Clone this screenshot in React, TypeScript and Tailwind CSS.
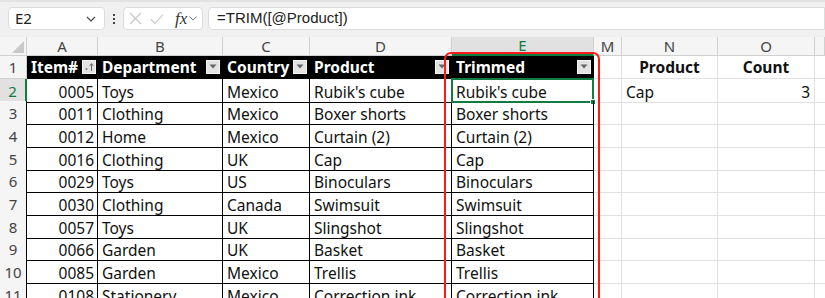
import React from 'react';

const rows = [
  ['0005', 'Toys', 'Mexico', "Rubik's cube", "Rubik's cube"],
  ['0011', 'Clothing', 'Mexico', 'Boxer shorts', 'Boxer shorts'],
  ['0012', 'Home', 'Mexico', 'Curtain (2)', 'Curtain (2)'],
  ['0016', 'Clothing', 'UK', 'Cap', 'Cap'],
  ['0029', 'Toys', 'US', 'Binoculars', 'Binoculars'],
  ['0030', 'Clothing', 'Canada', 'Swimsuit', 'Swimsuit'],
  ['0057', 'Toys', 'UK', 'Slingshot', 'Slingshot'],
  ['0066', 'Garden', 'UK', 'Basket', 'Basket'],
  ['0085', 'Garden', 'Mexico', 'Trellis', 'Trellis'],
  ['0108', 'Stationery', 'Mexico', 'Correction ink', 'Correction ink'],
];

const gridCols = 'grid grid-cols-[27px_71px_125px_87px_142px_142px_28px_96px_97px_1fr]';

const FilterButton: React.FC<{ sorted?: boolean }> = ({ sorted }) => (
  <div className="w-[14px] h-[14px] shrink-0 bg-[#e3e3e3] border border-[#f4f4f4] flex items-center justify-center">
    {sorted ? (
      <svg width="11" height="10" viewBox="0 0 11 10">
        <path d="M1 6.5 L4 6.5 L2.5 8.2 Z" fill="#666" />
        <path d="M7.5 9 L7.5 2" stroke="#666" strokeWidth="1" />
        <path d="M5.8 3.8 L7.5 1.6 L9.2 3.8" stroke="#666" strokeWidth="1" fill="none" />
      </svg>
    ) : (
      <svg width="8" height="5" viewBox="0 0 8 5">
        <path d="M0.5 0.5 L7.5 0.5 L4 4.5 Z" fill="#666" />
      </svg>
    )}
  </div>
);

const ColumnHeaders: React.FC = () => {
  const letters = ['A', 'B', 'C', 'D', 'E', 'M', 'N', 'O', ''];
  return (
    <div className={`${gridCols} h-[19px] bg-[#f5f5f5] text-[15px] leading-none text-[#444]`}>
      <div className="border-r border-b border-[#d0d0d0] flex items-end justify-end pr-[2px] pb-[2px]">
        <svg width="12" height="12" viewBox="0 0 12 12">
          <path d="M12 0 L12 12 L0 12 Z" fill="#c9c9c9" />
        </svg>
      </div>
      {letters.map((l, i) =>
        l === 'E' ? (
          <div key={i} className="bg-[#e1e1e1] border-r border-[#d0d0d0] border-b-2 border-b-[#107c41] flex items-center justify-center text-[#107c41]">
            {l}
          </div>
        ) : (
          <div key={i} className="border-r border-b border-[#d0d0d0] flex items-center justify-center">
            {l}
          </div>
        )
      )}
    </div>
  );
};

const RowNum: React.FC<{ n: number; active?: boolean; tableEdge?: boolean }> = ({ n, active, tableEdge }) => (
  <div
    className={
      active
        ? 'bg-[#e1e1e1] text-[#107c41] border-b border-[#d0d0d0] border-r-2 border-r-[#107c41] flex items-center justify-center pt-[2px] text-[15px] leading-none'
        : `bg-[#f5f5f5] text-[#444] border-b border-[#d0d0d0] border-r ${tableEdge ? 'border-r-black' : 'border-r-[#d0d0d0]'} flex items-center justify-center pt-[2px] text-[15px] leading-none`
    }
  >
    {n}
  </div>
);

const App: React.FC = () => {
  return (
    <div className="relative w-[825px] h-[298px] overflow-hidden bg-white font-['Noto_Sans',sans-serif]">
      {/* formula bar */}
      <div className="h-[37px] bg-[#f0f0f0] border-t-2 border-[#e2e2e2] flex items-start pt-[5px] pl-[8px]">
        <div className="w-[97px] h-[23px] bg-white border border-[#dcdcdc] rounded-[4px] flex items-center justify-between pl-[6px] pr-[8px] text-[15px] text-[#222]">
          <span>E2</span>
          <svg width="10" height="6" viewBox="0 0 10 6">
            <path d="M1 1 L5 5 L9 1" stroke="#444" strokeWidth="1.2" fill="none" />
          </svg>
        </div>
        <div className="w-[18px] h-[23px] flex flex-col items-center justify-center gap-[2px]">
          <span className="w-[2px] h-[2px] bg-[#444]" />
          <span className="w-[2px] h-[2px] bg-[#444]" />
          <span className="w-[2px] h-[2px] bg-[#444]" />
        </div>
        <div className="w-[80px] h-[23px] bg-white border border-[#dcdcdc] rounded-[4px] flex items-center pl-[5px] pr-[3px] gap-[8px]">
          <svg width="13" height="13" viewBox="0 0 13 13">
            <path d="M1 1 L12 12 M12 1 L1 12" stroke="#c4c4c4" strokeWidth="1.1" />
          </svg>
          <svg width="14" height="12" viewBox="0 0 14 12">
            <path d="M1 6.5 L5 10.5 L13 1.5" stroke="#c4c4c4" strokeWidth="1.1" fill="none" />
          </svg>
          <div className="flex items-center gap-[2px] ml-[3px]">
            <span className="font-['Liberation_Serif',serif] italic text-[17px] leading-none text-[#333]">fx</span>
            <svg width="8" height="5" viewBox="0 0 8 5">
              <path d="M0.5 0.5 L4 4 L7.5 0.5" stroke="#777" strokeWidth="1" fill="none" />
            </svg>
          </div>
        </div>
        <div className="ml-[5px] flex-1 h-[23px] bg-white border border-[#dcdcdc] rounded-l-[4px] flex items-center pl-[8px] font-['Liberation_Sans',sans-serif] text-[15px] text-[#222]">
          =TRIM([@Product])
        </div>
      </div>

      <ColumnHeaders />

      {/* row 1: table header */}
      <div className={`${gridCols} h-[22.67px] text-[15.5px] leading-[20px]`}>
        <RowNum n={1} />
        <div className="bg-black text-white font-bold flex items-center justify-between pl-[4px] pr-[2px] border-b border-black">
          <span>Item#</span>
          <FilterButton sorted />
        </div>
        {['Department', 'Country', 'Product', 'Trimmed'].map((h) => (
          <div key={h} className="bg-black text-white font-bold flex items-center justify-between pl-[4px] pr-[3px] border-b border-black">
            <span>{h}</span>
            <FilterButton />
          </div>
        ))}
        <div className="border-r border-b border-[#e1e1e1]" />
        <div className="border-r border-b border-[#e1e1e1] font-bold flex items-center justify-center text-[#111]">Product</div>
        <div className="border-r border-b border-[#e1e1e1] font-bold flex items-center justify-center text-[#111]">Count</div>
        <div className="border-b border-[#e1e1e1]" />
      </div>

      {rows.map((r, idx) => (
        <div key={idx} className={`${gridCols} h-[22.67px] text-[15.5px] leading-[20px] text-[#111]`}>
          <RowNum n={idx + 2} active={idx === 0} tableEdge />
          <div className="border-r border-b border-black flex items-center justify-end pr-[3px] pt-[3px] whitespace-nowrap overflow-hidden">{r[0]}</div>
          <div className="border-r border-b border-black flex items-center pl-[4px] pt-[3px] whitespace-nowrap overflow-hidden">{r[1]}</div>
          <div className="border-r border-b border-black flex items-center pl-[4px] pt-[3px] whitespace-nowrap overflow-hidden">{r[2]}</div>
          <div className="border-r border-b border-black flex items-center pl-[4px] pt-[3px] whitespace-nowrap overflow-hidden">{r[3]}</div>
          <div className="relative border-r border-b border-black flex items-center pl-[4px] pt-[3px] whitespace-nowrap">
            {r[4]}
            {idx === 0 && (
              <div className="absolute -left-[1px] -top-[1px] -right-[1px] -bottom-[1px] border-2 border-[#107c41]">
                <div className="absolute -right-[4px] -bottom-[4px] w-[6px] h-[6px] bg-[#107c41] border border-white" />
              </div>
            )}
          </div>
          <div className="border-r border-b border-[#e1e1e1]" />
          <div className="border-r border-b border-[#e1e1e1] flex items-center pl-[4px] pt-[3px]">{idx === 0 ? 'Cap' : ''}</div>
          <div className="border-r border-b border-[#e1e1e1] flex items-center justify-end pr-[4px] pt-[3px]">{idx === 0 ? '3' : ''}</div>
          <div className="border-b border-[#e1e1e1]" />
        </div>
      ))}

      {/* red highlight around Trimmed column */}
      <div className="absolute left-[444px] top-[52px] w-[156px] h-[270px] border-2 border-[#ff1a1a] rounded-[7px] pointer-events-none" />
    </div>
  );
};

export default App;
